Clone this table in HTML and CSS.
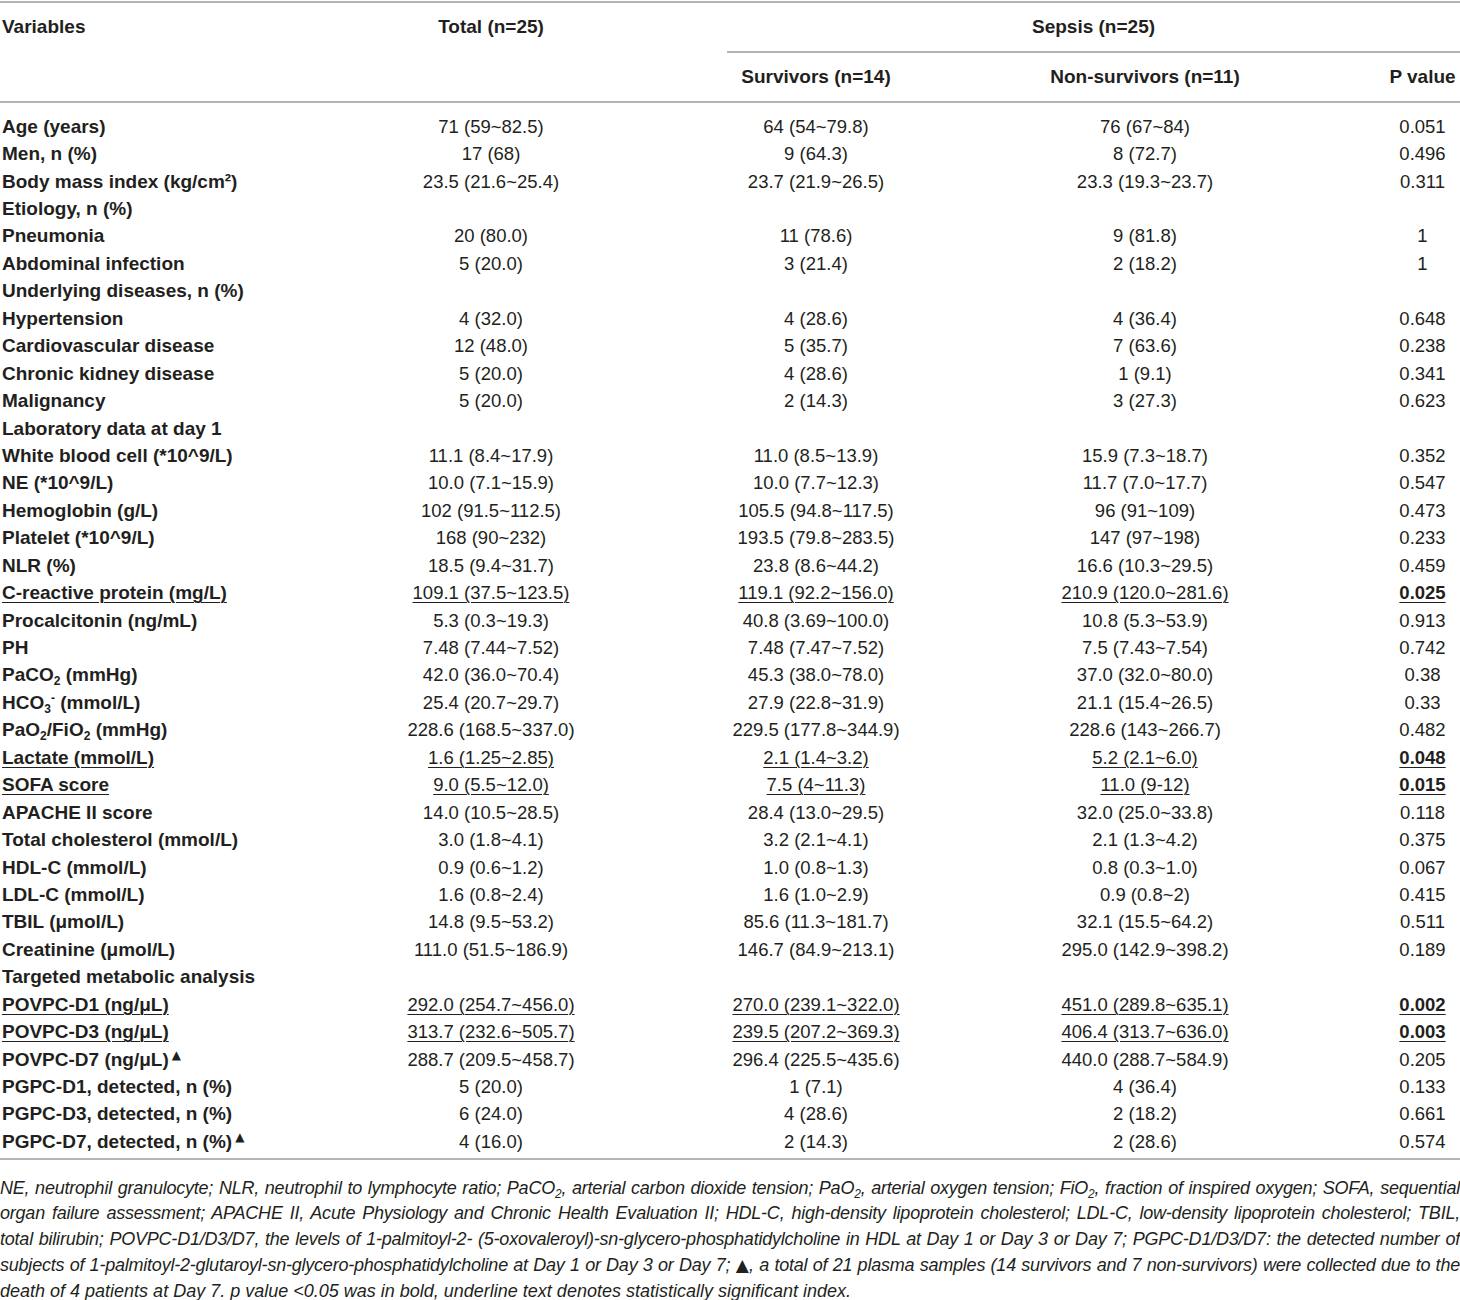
FILE: index.html
```html
<!DOCTYPE html>
<html>
<head>
<meta charset="utf-8">
<link rel="stylesheet" href="styles.css">
</head>
<body>
<table class="tbl">
<colgroup>
<col class="c-var"><col class="c-total"><col class="c-surv"><col class="c-non"><col class="c-p">
</colgroup>
<thead>
<tr class="h1">
<th class="lbl top" rowspan="2">Variables</th>
<th class="top" rowspan="2">Total (n=25)</th>
<th class="sepsis" colspan="3">Sepsis (n=25)</th>
</tr>
<tr class="h2">
<th>Survivors (n=14)</th>
<th>Non-survivors (n=11)</th>
<th>P value</th>
</tr>
</thead>
<tbody>
<tr class="first"><td class="lbl">Age (years)</td><td>71 (59~82.5)</td><td>64 (54~79.8)</td><td>76 (67~84)</td><td>0.051</td></tr>
<tr><td class="lbl">Men, n (%)</td><td>17 (68)</td><td>9 (64.3)</td><td>8 (72.7)</td><td>0.496</td></tr>
<tr><td class="lbl">Body mass index (kg/cm²)</td><td>23.5 (21.6~25.4)</td><td>23.7 (21.9~26.5)</td><td>23.3 (19.3~23.7)</td><td>0.311</td></tr>
<tr><td class="lbl">Etiology, n (%)</td><td></td><td></td><td></td><td></td></tr>
<tr><td class="lbl">Pneumonia</td><td>20 (80.0)</td><td>11 (78.6)</td><td>9 (81.8)</td><td>1</td></tr>
<tr><td class="lbl">Abdominal infection</td><td>5 (20.0)</td><td>3 (21.4)</td><td>2 (18.2)</td><td>1</td></tr>
<tr><td class="lbl">Underlying diseases, n (%)</td><td></td><td></td><td></td><td></td></tr>
<tr><td class="lbl">Hypertension</td><td>4 (32.0)</td><td>4 (28.6)</td><td>4 (36.4)</td><td>0.648</td></tr>
<tr><td class="lbl">Cardiovascular disease</td><td>12 (48.0)</td><td>5 (35.7)</td><td>7 (63.6)</td><td>0.238</td></tr>
<tr><td class="lbl">Chronic kidney disease</td><td>5 (20.0)</td><td>4 (28.6)</td><td>1 (9.1)</td><td>0.341</td></tr>
<tr><td class="lbl">Malignancy</td><td>5 (20.0)</td><td>2 (14.3)</td><td>3 (27.3)</td><td>0.623</td></tr>
<tr><td class="lbl">Laboratory data at day 1</td><td></td><td></td><td></td><td></td></tr>
<tr><td class="lbl">White blood cell (*10^9/L)</td><td>11.1 (8.4~17.9)</td><td>11.0 (8.5~13.9)</td><td>15.9 (7.3~18.7)</td><td>0.352</td></tr>
<tr><td class="lbl">NE (*10^9/L)</td><td>10.0 (7.1~15.9)</td><td>10.0 (7.7~12.3)</td><td>11.7 (7.0~17.7)</td><td>0.547</td></tr>
<tr><td class="lbl">Hemoglobin (g/L)</td><td>102 (91.5~112.5)</td><td>105.5 (94.8~117.5)</td><td>96 (91~109)</td><td>0.473</td></tr>
<tr><td class="lbl">Platelet (*10^9/L)</td><td>168 (90~232)</td><td>193.5 (79.8~283.5)</td><td>147 (97~198)</td><td>0.233</td></tr>
<tr><td class="lbl">NLR (%)</td><td>18.5 (9.4~31.7)</td><td>23.8 (8.6~44.2)</td><td>16.6 (10.3~29.5)</td><td>0.459</td></tr>
<tr class="sig"><td class="lbl"><u>C-reactive protein (mg/L)</u></td><td><u>109.1 (37.5~123.5)</u></td><td><u>119.1 (92.2~156.0)</u></td><td><u>210.9 (120.0~281.6)</u></td><td class="pb"><u>0.025</u></td></tr>
<tr><td class="lbl">Procalcitonin (ng/mL)</td><td>5.3 (0.3~19.3)</td><td>40.8 (3.69~100.0)</td><td>10.8 (5.3~53.9)</td><td>0.913</td></tr>
<tr><td class="lbl">PH</td><td>7.48 (7.44~7.52)</td><td>7.48 (7.47~7.52)</td><td>7.5 (7.43~7.54)</td><td>0.742</td></tr>
<tr><td class="lbl">PaCO<sub>2</sub> (mmHg)</td><td>42.0 (36.0~70.4)</td><td>45.3 (38.0~78.0)</td><td>37.0 (32.0~80.0)</td><td>0.38</td></tr>
<tr><td class="lbl">HCO<sub>3</sub><sup class="minus">-</sup> (mmol/L)</td><td>25.4 (20.7~29.7)</td><td>27.9 (22.8~31.9)</td><td>21.1 (15.4~26.5)</td><td>0.33</td></tr>
<tr><td class="lbl">PaO<sub>2</sub>/FiO<sub>2</sub> (mmHg)</td><td>228.6 (168.5~337.0)</td><td>229.5 (177.8~344.9)</td><td>228.6 (143~266.7)</td><td>0.482</td></tr>
<tr class="sig"><td class="lbl"><u>Lactate (mmol/L)</u></td><td><u>1.6 (1.25~2.85)</u></td><td><u>2.1 (1.4~3.2)</u></td><td><u>5.2 (2.1~6.0)</u></td><td class="pb"><u>0.048</u></td></tr>
<tr class="sig"><td class="lbl"><u>SOFA score</u></td><td><u>9.0 (5.5~12.0)</u></td><td><u>7.5 (4~11.3)</u></td><td><u>11.0 (9-12)</u></td><td class="pb"><u>0.015</u></td></tr>
<tr><td class="lbl">APACHE II score</td><td>14.0 (10.5~28.5)</td><td>28.4 (13.0~29.5)</td><td>32.0 (25.0~33.8)</td><td>0.118</td></tr>
<tr><td class="lbl">Total cholesterol (mmol/L)</td><td>3.0 (1.8~4.1)</td><td>3.2 (2.1~4.1)</td><td>2.1 (1.3~4.2)</td><td>0.375</td></tr>
<tr><td class="lbl">HDL-C (mmol/L)</td><td>0.9 (0.6~1.2)</td><td>1.0 (0.8~1.3)</td><td>0.8 (0.3~1.0)</td><td>0.067</td></tr>
<tr><td class="lbl">LDL-C (mmol/L)</td><td>1.6 (0.8~2.4)</td><td>1.6 (1.0~2.9)</td><td>0.9 (0.8~2)</td><td>0.415</td></tr>
<tr><td class="lbl">TBIL (μmol/L)</td><td>14.8 (9.5~53.2)</td><td>85.6 (11.3~181.7)</td><td>32.1 (15.5~64.2)</td><td>0.511</td></tr>
<tr><td class="lbl">Creatinine (μmol/L)</td><td>111.0 (51.5~186.9)</td><td>146.7 (84.9~213.1)</td><td>295.0 (142.9~398.2)</td><td>0.189</td></tr>
<tr><td class="lbl">Targeted metabolic analysis</td><td></td><td></td><td></td><td></td></tr>
<tr class="sig"><td class="lbl"><u>POVPC-D1 (ng/μL)</u></td><td><u>292.0 (254.7~456.0)</u></td><td><u>270.0 (239.1~322.0)</u></td><td><u>451.0 (289.8~635.1)</u></td><td class="pb"><u>0.002</u></td></tr>
<tr class="sig"><td class="lbl"><u>POVPC-D3 (ng/μL)</u></td><td><u>313.7 (232.6~505.7)</u></td><td><u>239.5 (207.2~369.3)</u></td><td><u>406.4 (313.7~636.0)</u></td><td class="pb"><u>0.003</u></td></tr>
<tr><td class="lbl">POVPC-D7 (ng/μL)<sup class="tri">▲</sup></td><td>288.7 (209.5~458.7)</td><td>296.4 (225.5~435.6)</td><td>440.0 (288.7~584.9)</td><td>0.205</td></tr>
<tr><td class="lbl">PGPC-D1, detected, n (%)</td><td>5 (20.0)</td><td>1 (7.1)</td><td>4 (36.4)</td><td>0.133</td></tr>
<tr><td class="lbl">PGPC-D3, detected, n (%)</td><td>6 (24.0)</td><td>4 (28.6)</td><td>2 (18.2)</td><td>0.661</td></tr>
<tr class="last"><td class="lbl">PGPC-D7, detected, n (%)<sup class="tri">▲</sup></td><td>4 (16.0)</td><td>2 (14.3)</td><td>2 (28.6)</td><td>0.574</td></tr>
</tbody>
</table>
<div class="foot">
<span class="fl">NE, neutrophil granulocyte; NLR, neutrophil to lymphocyte ratio; PaCO<sub>2</sub>, arterial carbon dioxide tension; PaO<sub>2</sub>, arterial oxygen tension; FiO<sub>2</sub>, fraction of inspired oxygen; SOFA, sequential</span>
<span class="fl">organ failure assessment; APACHE II, Acute Physiology and Chronic Health Evaluation II; HDL-C, high-density lipoprotein cholesterol; LDL-C, low-density lipoprotein cholesterol; TBIL,</span>
<span class="fl">total bilirubin; POVPC-D1/D3/D7, the levels of 1-palmitoyl-2- (5-oxovaleroyl)-sn-glycero-phosphatidylcholine in HDL at Day 1 or Day 3 or Day 7; PGPC-D1/D3/D7: the detected number of</span>
<span class="fl">subjects of 1-palmitoyl-2-glutaroyl-sn-glycero-phosphatidylcholine at Day 1 or Day 3 or Day 7; <span class="ftri">▲</span>, a total of 21 plasma samples (14 survivors and 7 non-survivors) were collected due to the</span>
<span class="fl lastl">death of 4 patients at Day 7. p value &lt;0.05 was in bold, underline text denotes statistically significant index.</span>
</div>
</body>
</html>
```

FILE: styles.css
```css
html, body {
  margin: 0;
  padding: 0;
  background: #ffffff;
}
body {
  font-family: "Liberation Sans", Arial, Helvetica, sans-serif;
  color: #231f20;
  width: 1460px;
}
.tbl {
  width: 1460px;
  border-collapse: collapse;
  table-layout: fixed;
  margin-top: 1px;
  border-top: 2px solid #b4b4b4;
  border-bottom: 2px solid #b4b4b4;
}
.c-var { width: 255px; }
.c-total { width: 472px; }
.c-surv { width: 178px; }
.c-non { width: 480px; }
.c-p { width: 75px; }

th {
  font-weight: bold;
  font-size: 19px;
  text-align: center;
  padding: 0;
  white-space: nowrap;
}
.h1 th { height: 48px; }
.h2 th { height: 48px; }
th.top { vertical-align: top; padding-top: 13px; }
th.sepsis { border-bottom: 2px solid #b4b4b4; }
thead .h2 th, thead th.top { border-bottom: 2px solid #b4b4b4; }
th.lbl { text-align: left; padding-left: 2px; }

td {
  font-size: 18.5px;
  text-align: center;
  padding: 0;
  height: 27.45px;
  line-height: 22px;
  white-space: nowrap;
}
td.lbl {
  text-align: left;
  font-weight: bold;
  font-size: 19px;
  padding-left: 2px;
}
tr.first td { padding-top: 10px; }
tr.last td { padding-bottom: 2px; }
td.pb { font-weight: bold; }
u { text-decoration-thickness: 1px; text-underline-offset: 3px; }

sub {
  font-size: 12px;
  vertical-align: -4px;
  line-height: 0;
}
sup.minus { font-size: 12px; vertical-align: 7px; line-height: 0; }
sup.tri {
  font-family: "DejaVu Sans", sans-serif;
  font-size: 12px;
  vertical-align: 7px;
  line-height: 0;
  margin-left: 3px;
}

.foot {
  margin-top: 16px;
  font-style: italic;
  font-size: 18px;
  line-height: 25.8px;
  letter-spacing: -0.22px;
}
.fl {
  display: block;
  text-align: justify;
  text-align-last: justify;
  white-space: nowrap;
}
.fl.lastl { text-align-last: left; letter-spacing: 0; }
.foot sub { font-size: 12px; vertical-align: -4px; }
.ftri {
  font-family: "DejaVu Sans", sans-serif;
  font-style: normal;
  font-size: 17px;
  line-height: 0;
}
```
